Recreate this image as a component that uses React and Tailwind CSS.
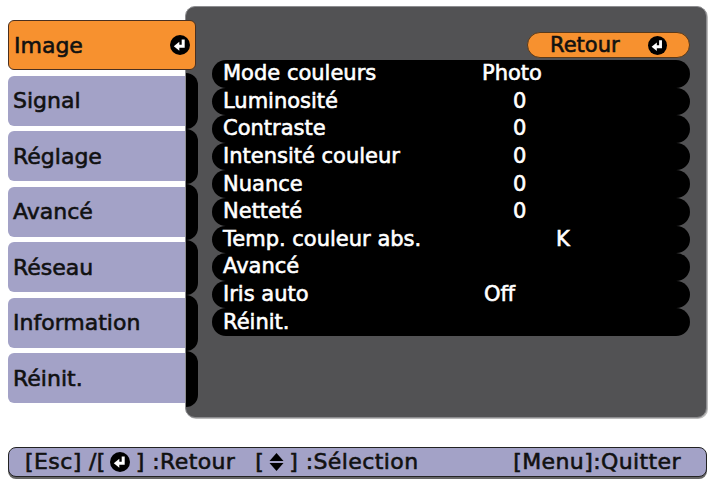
import React from 'react';

const EnterIcon = ({ className = '' }) => (
  <svg viewBox="0 0 20 20" className={`shrink-0 ${className}`}>
    <circle cx="10" cy="10" r="10" fill="#000" />
    <path d="M13.2 4.5v6.8H8.5" fill="none" stroke="#fff" strokeWidth="3" />
    <path d="M3.8 11.3 9.3 6.8v9z" fill="#fff" />
  </svg>
);

const UpDownIcon = ({ className = '' }) => (
  <svg viewBox="0 0 16 20" className={`shrink-0 ${className}`}>
    <path d="M8 1 15 9H1z" fill="#000" />
    <path d="M8 19 15 11H1z" fill="#000" />
  </svg>
);

const tabs = ['Image', 'Signal', 'Réglage', 'Avancé', 'Réseau', 'Information', 'Réinit.'];

const rows = [
  { label: 'Mode couleurs', value: 'Photo', pad: 'pl-0' },
  { label: 'Luminosité', value: '0', pad: 'pl-[31px]' },
  { label: 'Contraste', value: '0', pad: 'pl-[31px]' },
  { label: 'Intensité couleur', value: '0', pad: 'pl-[31px]' },
  { label: 'Nuance', value: '0', pad: 'pl-[31px]' },
  { label: 'Netteté', value: '0', pad: 'pl-[31px]' },
  { label: 'Temp. couleur abs.', value: 'K', pad: 'pl-[74px]' },
  { label: 'Avancé', value: '', pad: 'pl-0' },
  { label: 'Iris auto', value: 'Off', pad: 'pl-[2px]' },
  { label: 'Réinit.', value: '', pad: 'pl-0' },
];

export default function App() {
  return (
    <div className="w-[715px] h-[481px] bg-white overflow-hidden font-['DejaVu_Sans',sans-serif] text-[21px] [-webkit-text-stroke:0.6px_currentColor]">
      <div className="flex pt-[6px] pl-[8px]">
        {/* Tabs */}
        <div className="relative z-10 flex flex-col gap-[5.5px] w-[177px] pt-[14px] text-[22px]">
          {tabs.map((tab, i) =>
            i === 0 ? (
              <div
                key={tab}
                className="flex items-center justify-between w-[188px] h-[50px] pl-[5px] pr-[5px] rounded-[6px] bg-[#f7912f] border border-[#4a3020] text-[#111]"
              >
                <span>{tab}</span>
                <EnterIcon className="w-[20px] h-[20px]" />
              </div>
            ) : (
              <div
                key={tab}
                className="flex items-center h-[50px] pl-[5px] rounded-l-[6px] bg-[#a3a2c7] text-[#111]"
              >
                {tab}
              </div>
            )
          )}
        </div>

        {/* Panel */}
        <div className="flex w-[522px] h-[412px] rounded-[10px] bg-[#525254] border border-[#8d8d90] shadow-[1px_1px_0_#bbb]">
          <div className="flex flex-col w-[12px] pt-[66px]">
            {tabs.slice(1).map((tab) => (
              <div key={tab} className="h-[55.6px] bg-black rounded-r-[12px]" />
            ))}
          </div>
          <div className="flex flex-col flex-1 pl-[14px] pr-[16px] pt-[25px]">
            <div className="flex justify-end">
              <div className="flex items-center gap-[28px] w-[163px] h-[26px] pl-[22px] rounded-full bg-[#f7912f] border border-[#5a3a1a] text-[#111] leading-none">
                <span>Retour</span>
                <EnterIcon className="w-[19px] h-[19px]" />
              </div>
            </div>
            <div className="flex flex-col mt-[2px]">
              {rows.map((row) => (
                <div
                  key={row.label}
                  className="flex items-center h-[27.6px] pl-[11px] rounded-full bg-black text-white leading-none"
                >
                  <span className="w-[259px]">{row.label}</span>
                  <span className={row.pad}>{row.value}</span>
                </div>
              ))}
            </div>
          </div>
        </div>
      </div>

      {/* Bottom bar */}
      <div className="flex items-center mt-[29px] ml-[8px] w-[699px] h-[30px] pl-[16px] rounded-[8px] bg-[#a3a2c7] border border-[#222] shadow-[0_2px_0_#666] text-[#111] text-[22px] tracking-[0.4px] leading-none">
        <span>[Esc] /[</span>
        <EnterIcon className="w-[20px] h-[20px] ml-[4px] mr-[6px]" />
        <span>] :Retour</span>
        <span className="ml-[20px]">[</span>
        <UpDownIcon className="w-[17px] h-[20px] mx-[4px]" />
        <span>] :Sélection</span>
        <span className="ml-auto mr-[25px]">[Menu]:Quitter</span>
      </div>
    </div>
  );
}
